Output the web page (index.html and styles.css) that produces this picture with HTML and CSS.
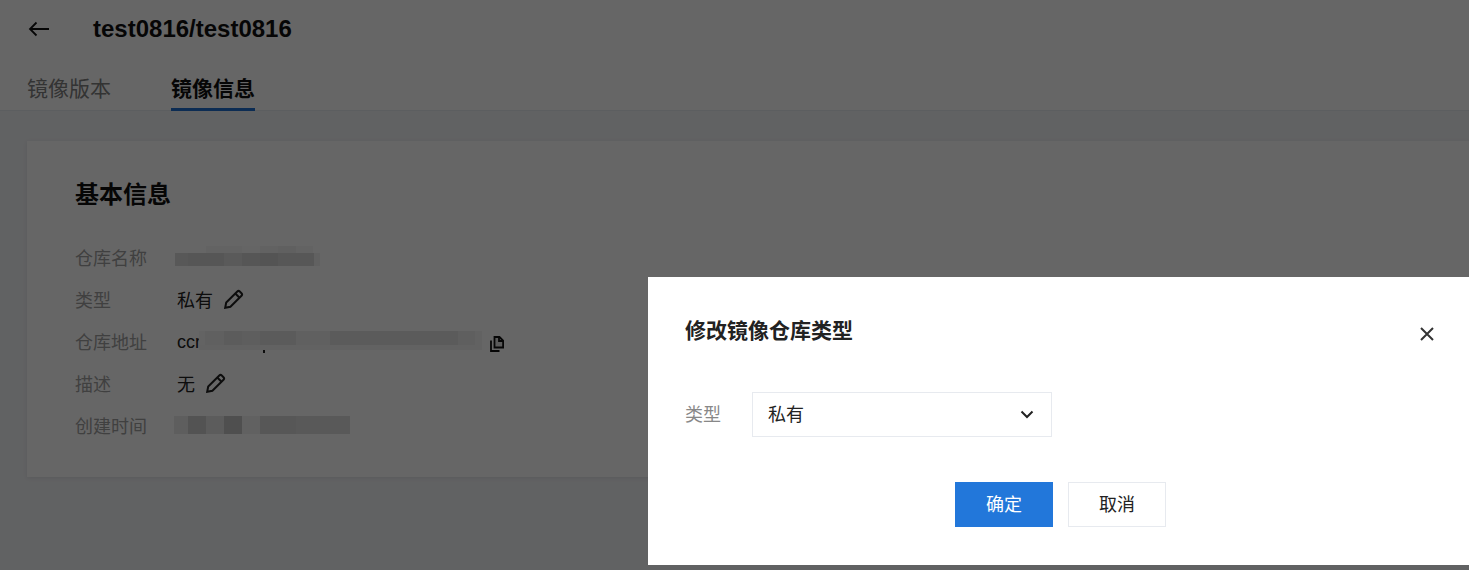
FILE: index.html
```html
<!DOCTYPE html>
<html lang="zh-CN">
<head>
<meta charset="utf-8">
<title>镜像信息</title>
<link rel="stylesheet" href="styles.css">
</head>
<body>
<div class="page">
  <header class="top">
    <div class="titlebar">
      <svg class="back" width="21" height="16" viewBox="0 0 21 16" fill="none" stroke="currentColor" stroke-width="1.8"><path d="M21 8H2M8.500 1.500 2 8l6.500 6.500"/></svg>
      <h1 class="repo">test0816/test0816</h1>
    </div>
    <nav class="tabs">
      <a class="tab">镜像版本</a>
      <a class="tab active">镜像信息</a>
    </nav>
  </header>
  <main class="content">
    <section class="card">
      <h2 class="card-title">基本信息</h2>
      <dl class="info">
        <div class="row"><dt>仓库名称</dt><dd><span class="mosaic mosaic-name"></span></dd></div>
        <div class="row"><dt>类型</dt><dd>私有
          <svg class="edit" width="20" height="20" viewBox="0 0 20 20" fill="none" stroke="currentColor" stroke-width="2"><path d="M1.200 18.800 2.200 13.600 13.300 2.500a1.800 1.800 0 0 1 2.500 0L17.500 4.200a1.800 1.800 0 0 1 0 2.500L6.400 17.800Z"/><path d="M11.300 4.500 15.500 8.700"/></svg></dd></div>
        <div class="row"><dt>仓库地址</dt><dd class="addr">ccr<span class="mosaic mosaic-addr"></span>
          <svg class="copy" width="14" height="16" viewBox="0 0 14 16" fill="none" stroke="currentColor" stroke-width="1.800"><path d="M4.500 1h5l3.600 3.600V11.500H4.500Z" fill="currentColor" fill-opacity=".12"/><path d="M9 1v4h4"/><path d="M1 4.500V15h8.500"/></svg></dd></div>
        <div class="row"><dt>描述</dt><dd>无
          <svg class="edit" width="20" height="20" viewBox="0 0 20 20" fill="none" stroke="currentColor" stroke-width="2"><path d="M1.200 18.800 2.200 13.600 13.300 2.500a1.800 1.800 0 0 1 2.500 0L17.500 4.200a1.800 1.800 0 0 1 0 2.500L6.400 17.800Z"/><path d="M11.300 4.500 15.500 8.700"/></svg></dd></div>
        <div class="row"><dt>创建时间</dt><dd><span class="mosaic mosaic-time"></span></dd></div>
      </dl>
    </section>
  </main>
</div>
<div class="mask"></div>
<div class="dialog">
  <div class="dialog-head">
    <h3 class="dialog-title">修改镜像仓库类型</h3>
    <svg class="close" width="14" height="14" viewBox="0 0 14 14" fill="none" stroke="currentColor" stroke-width="2"><path d="M1 1l12 12M13 1 1 13"/></svg>
  </div>
  <div class="field">
    <label class="field-label">类型</label>
    <div class="select"><span class="select-value">私有</span>
      <svg width="14" height="9" viewBox="0 0 14 9" fill="none" stroke="currentColor" stroke-width="2"><path d="M1.500 1.500 7 7l5.500-5.500"/></svg>
    </div>
  </div>
  <div class="actions">
    <button class="btn primary"><span class="btn-text">确定</span></button>
    <button class="btn"><span class="btn-text">取消</span></button>
  </div>
</div>
</body>
</html>
```
FILE: styles.css
```css
* { box-sizing: border-box; }
html, body { margin: 0; height: 570px; overflow: hidden; }
body {
  font-family: "Liberation Sans", "Noto Sans CJK SC", sans-serif;
  color: #000;
  background: #f3f4f7;
  position: relative;
}
.page { height: 570px; display: flex; flex-direction: column; }
.top {
  height: 111px;
  background: #fff;
  border-bottom: 1px solid #e7eaef;
  padding: 0 27px;
}
.titlebar { display: flex; align-items: center; height: 58px; }
.back { color: #111; margin-left: 1px; margin-right: 44px; }
.repo { margin: 0; font-size: 24px; font-weight: 700; color: #111; line-height: 58px; }
.tabs { display: flex; gap: 60px; height: 52px; }
.tab {
  font-size: 21px;
  line-height: 62px;
  color: #808080;
  height: 53px;
}
.tab.active {
  color: #111;
  font-weight: 700;
  border-bottom: 3px solid #1f6fd0;
}
.content { flex: 1; padding: 30px 0 0 27px; }
.card {
  height: 336px;
  background: #fff;
  padding: 36px 48px 0;
  box-shadow: 0 1px 4px rgba(54, 58, 80, .1);
}
.card-title { margin: 0 0 23px; font-size: 24px; line-height: 36px; font-weight: 700; color: #111; }
.info { margin: 0; }
.row { display: flex; align-items: center; height: 42px; font-size: 18px; }
.row dt { width: 102px; color: #a0a0a0; }
.row dd { margin: 0; color: #222; display: flex; align-items: center; position: relative; }
.edit { margin-left: 11px; color: #222; }
.copy { color: #111; position: absolute; left: 313px; top: 6px; }
.addr { width: 320px; padding-top: 2px; }
.mosaic { display: block; }
.mosaic-name {
  width: 145px; height: 20px; margin: -2px 0 0 -2px;
  background:
    linear-gradient(90deg, #dcdcdc 0 13px, #d6d6d6 13px 49px, #e2e2e2 49px 67px, #d8d8d8 67px 85px, #d2d2d2 85px 103px, #d9d9d9 103px 139px, #f2f2f2 139px) 0 7px / 145px 13px no-repeat,
    linear-gradient(90deg, #f8f8f8 0 36px, #fdfdfd 36px 54px, #f4f4f4 54px 72px, #f1f1f1 72px 90px, #f8f8f8 90px) 31px 0 / 107px 7px no-repeat;
}
.mosaic-addr {
  position: absolute; left: 22px; top: 1px; width: 283px; height: 19px;
  background:
    linear-gradient(90deg, #f8f8f8 0 6px, #efefef 6px 25px, #e6e6e6 25px 43px, #ebebeb 43px 61px, #e3e3e3 61px 97px, #f0f0f0 97px 131px, #e4e4e4 131px 259px, #ededed 259px 276px, transparent 276px) 0 0 / 283px 14px no-repeat,
    linear-gradient(#f5f5f5, #f5f5f5);
}
.mosaic-addr::after {
  content: "";
  position: absolute; left: 64px; top: 19px;
  width: 1.500px; height: 3px;
  background: #222;
}
.mosaic-time {
  width: 176px; height: 18px; margin: -1px 0 0 -3px;
  background:
    linear-gradient(90deg, #ececec 14px, #d0d0d0 14px 32px, #e6e6e6 32px 50px, #c6c6c6 50px 68px, #f2f2f2 68px 86px, #dadada 86px 122px, #dedede 122px);
}
.mask { position: absolute; inset: 0; background: rgba(0, 0, 0, .6); }
.dialog {
  position: absolute;
  left: 648px; top: 277px; right: 0; height: 288px;
  background: #fff;
  padding: 37px 32px 0 37px;
}
.dialog-head { display: flex; align-items: center; justify-content: space-between; height: 36px; }
.dialog-title { margin: -1px 0 1px; font-size: 21px; line-height: 36px; font-weight: 700; color: #222; }
.close { color: #333; margin-top: 4px; margin-right: 3px; }
.field { display: flex; align-items: center; margin-top: 42px; height: 45px; }
.field-label { width: 67px; font-size: 18px; color: #888; margin-top: -4px; }
.select {
  width: 300px; height: 45px;
  border: 1px solid #e7eaef;
  padding: 0 17px 0 15px;
  display: flex; align-items: center; justify-content: space-between;
  font-size: 18px; color: #222;
}
.select-value { margin-top: -4px; }
.actions { display: flex; gap: 15px; margin-top: 45px; padding-left: 270px; }
.btn {
  width: 98px; height: 45px;
  font: inherit; font-size: 18px;
  background: #fff; color: #222;
  border: 1px solid #e7eaef;
  padding: 0 0 3px;
}
.btn.primary { background: #2277da; border-color: #2277da; color: #fff; }
```
